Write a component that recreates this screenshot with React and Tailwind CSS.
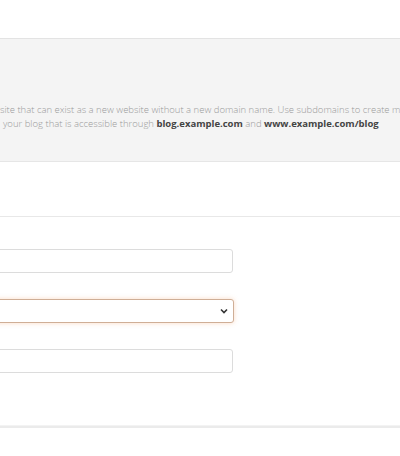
import React from 'react';

const font = { fontFamily: '"Open Sans", "Noto Sans", sans-serif' };

export default function App() {
  return (
    <div className="w-[400px] h-[456px] overflow-hidden bg-white" style={font}>
      {/* top bar */}
      <div className="h-[39px] bg-white border-b border-[#e3e3e3]" />

      {/* description panel */}
      <div className="h-[123px] bg-[#f4f4f4] border-b border-[#e6e6e6] pt-[64px] overflow-hidden">
        <p className="text-[9.5px] leading-[13.5px] font-light text-[#9a9a9a] whitespace-nowrap">
          site that can exist as a new website without a new domain name. Use subdomains to create memorable URLs
        </p>
        <p className="pl-[3px] text-[9.5px] leading-[13.5px] font-light text-[#9a9a9a] whitespace-nowrap">
          your blog that is accessible through{' '}
          <b className="font-bold text-[#444]">blog.example.com</b> and{' '}
          <b className="font-bold text-[#444]">www.example.com/blog</b>
        </p>
      </div>

      {/* spacer + divider */}
      <div className="h-[55px] border-b border-[#e8e8e8]" />

      {/* form */}
      <div className="pt-[32px] flex flex-col gap-[26px]">
        <div className="-ml-[10px] w-[243px] h-[24px] rounded-[3px] border border-[#dcdcdc] bg-white" />
        <div className="-ml-[10px] w-[244px] h-[24px] rounded-[3px] border border-[#cfae96] bg-white shadow-[0_0_5px_rgba(240,150,90,0.35)] flex items-center justify-end pr-[5px]">
          <svg width="8" height="6" viewBox="0 0 8 6" fill="none">
            <path d="M1 1.5 L4 4.5 L7 1.5" stroke="#333" strokeWidth="1.6" />
          </svg>
        </div>
        <div className="-ml-[10px] w-[243px] h-[24px] rounded-[3px] border border-[#dcdcdc] bg-white" />
      </div>

      {/* bottom divider */}
      <div className="mt-[52px] h-[3px] border-t border-[#f3f3f3] bg-[#ebebeb]" />
    </div>
  );
}
